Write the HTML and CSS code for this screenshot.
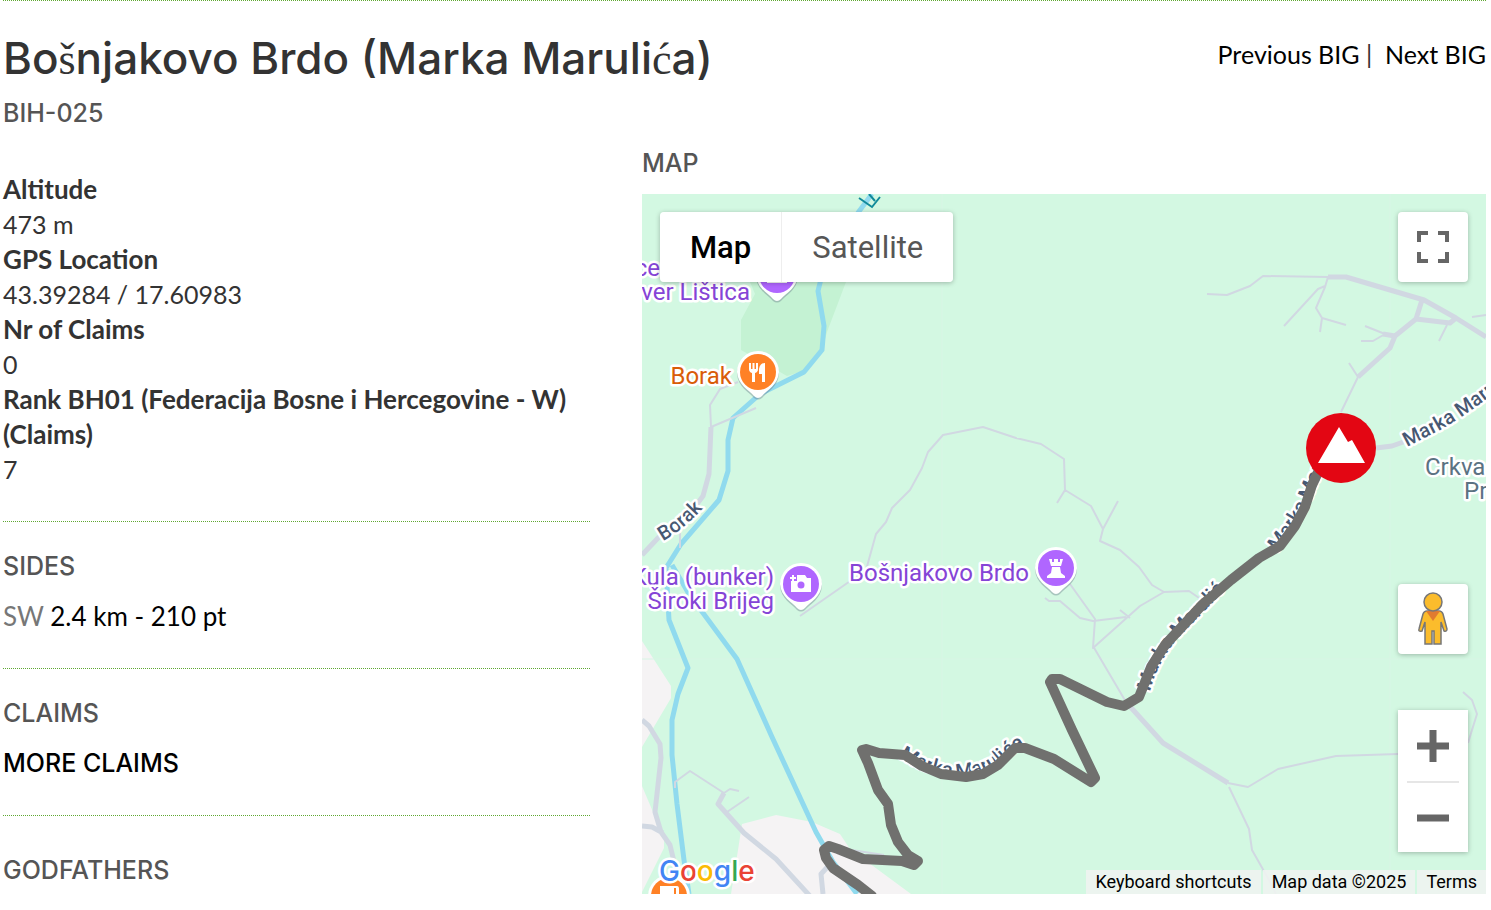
FILE: index.html
```html
<!DOCTYPE html>
<html lang="en">
<head>
<meta charset="utf-8">
<title>Bošnjakovo Brdo (Marka Marulića)</title>
<link rel="stylesheet" href="styles.css">
</head>
<body>
<div class="page">
  <header class="page-head">
    <div>
      <h1 class="title">Bo<span class="alt">š</span>njakovo Brdo (Marka Maruli<span class="alt">ć</span>a)</h1>
      <h2 class="heading code">BIH-025</h2>
    </div>
    <nav class="pager"><a href="#prev">Previous BIG</a> |&nbsp; <a href="#next">Next BIG</a></nav>
  </header>
  <main class="columns">
    <div class="info">
      <dl class="facts">
        <dt>Altitude</dt><dd>473 m</dd>
        <dt>GPS Location</dt><dd>43.39284 / 17.60983</dd>
        <dt>Nr of Claims</dt><dd>0</dd>
        <dt>Rank BH01 (Federacija Bosne i Hercegovine - W) (Claims)</dt><dd>7</dd>
      </dl>
      <section class="block">
        <h2 class="heading">SIDES</h2>
        <p class="line"><span class="side">SW</span> <a href="#side">2.4 km - 210 pt</a></p>
      </section>
      <section class="block">
        <h2 class="heading">CLAIMS</h2>
        <p class="line more"><a href="#claims">MORE CLAIMS</a></p>
      </section>
      <section class="block last">
        <h2 class="heading">GODFATHERS</h2>
      </section>
    </div>
    <section class="map-col">
      <h2 class="heading">MAP</h2>
      <div class="map">
        <svg class="tiles" viewBox="642 194 844 700" preserveAspectRatio="xMidYMid slice" role="img" aria-label="Map of Bošnjakovo Brdo">
          <defs>
            <path id="r1" d="M899 757Q924 774 958 778Q990 776 1009 756L1030 742"/>
            <path id="r2" d="M1150 692Q1158 660 1180 636L1228 587"/>
            <path id="r3" d="M1277 552Q1302 522 1314 492L1328 458"/>
            <path id="r4" d="M1407 447L1442 429Q1470 413 1502 387"/>
            <path id="r5" d="M663 541Q686 528 706 505"/>
            <g id="pin">
              <path class="pin-shadow" d="M-21 2A21 21 0 1 1 21 2C20 15 9 20 4 26Q0 29-4 26C-9 20-20 15-21 2Z"/>
              <path fill="#fff" d="M-21 0A21 21 0 1 1 21 0C20 13 9 18 4 24Q0 28-4 24C-9 18-20 13-21 0Z"/>
            </g>
          </defs>
          <rect x="642" y="194" width="844" height="700" fill="#d3f8e2"/>
          <path fill="#c4f2d3" d="M750 282H846L827 332L822 350L803 371L787 376L741 350V320L755 294Z"/>
          <path fill="#f5f3f4" d="M642 641L671 686V698L642 747ZM642 786L664 838V848L642 892ZM742 824L776 815L812 822L840 834L850 849L911 894H731L738 850Z"/>
          <g class="tile-seams"><path d="M942 194V894M1390 194V894M642 659H1486"/></g>
          <g class="water">
            <path d="M872 194Q840 235 822 275L818 291L824 326L822 350L804 372L760 394L733 418L728 440V471L719 500L681 544L666 568L669 620L688 668L678 694L672 720V755L677 804L684 860L689 894"/>
            <path d="M672 565L689 594L737 659L772 737L816 832L833 862L857 894"/>
          </g>
          <g class="road minor">
            <path d="M756 408L711 427M738 382L720 389L710 405L711 427M680 533V548"/>
            <path d="M800 616L866 570L876 534L886 522L892 508L910 490L922 468L928 452L943 435L983 427L1016 438L1041 444L1064 459L1065 490L1057 503M1065 490L1091 506L1103 529L1118 501M1103 529L1100 541L1120 550L1139 567L1152 585L1164 592L1189 591L1202 600M1164 592L1140 606L1093 648L1095 619L1070 584M1045 598L1049 601H1060L1080 618L1093 621L1126 617M1093 646L1126 702M1120 610L1130 618M1228 783L1248 787L1278 769L1336 756L1398 754M1229 787L1249 829L1252 850L1269 880L1276 894"/>
            <path d="M1207 294L1227 295L1250 286L1263 276L1328 277M1328 277L1325 287L1316 308L1322 318L1346 325M1322 318L1320 332M1325 286L1318 289L1284 326M1365 326L1385 334L1373 341H1361M1349 363L1358 377L1341 412M1447 325L1439 341M1472 317L1486 315"/>
            <path d="M675 788V782L690 771L724 793L730 789L739 791M727 812L749 797M1463 692L1472 700L1477 714L1468 743"/>
            <path d="M845 849L884 855M859 750L900 752"/>
          </g>
          <g class="road major">
            <path d="M711 427L709 474L703 496L694 508L658 538L642 555"/>
            <path d="M1126 702L1163 743L1228 783M1376 448L1392 446L1409 440M1328 277H1346L1424 300L1456 318L1486 337M1422 300L1416 319L1395 336L1390 348L1358 377M1416 319L1450 323L1456 318M1383 334L1395 336"/>
            <path d="M642 720L649 726L660 744L661 758L655 812L661 832L670 845L676 870M642 826L652 827L663 833M724 793L718 804L744 833L776 859L810 896M832 862L821 874L823 894"/>
          </g>
          <g class="road-label">
            <text><textPath href="#r1">Marka Marulića</textPath></text>
            <text><textPath href="#r2">Marka Marulića</textPath></text>
            <text><textPath href="#r3">Marka Marulića</textPath></text>
            <text><textPath href="#r4">Marka Marulića</textPath></text>
            <text><textPath href="#r5">Borak</textPath></text>
          </g>
          <path class="climb" d="M872 896L858 885L833 868L826 858L824 850L829 846L838 849L863 859L902 861L914 865L918 861L908 855L898 842L891 825L888 804L878 790L868 763L862 750L866 749L879 753L905 755L922 766L941 774L966 777L983 774L998 765L1015 748H1025L1054 759L1091 782L1095 778L1072 730L1050 682L1052 679H1060L1107 702L1124 706L1139 697L1151 667L1165 645L1203 604L1231 580L1259 558L1280 546L1295 526L1305 507L1312 485L1321 466"/>
          <g class="place purple">
            <text x="660" y="276" text-anchor="end">ce</text>
            <text x="750" y="300" text-anchor="end">ver Lištica</text>
            <text x="774" y="585" text-anchor="end">Kula (bunker)</text>
            <text x="774" y="609" text-anchor="end">Široki Brijeg</text>
            <text x="1029" y="581" text-anchor="end">Bošnjakovo Brdo</text>
          </g>
          <text class="place orange" x="732" y="384" text-anchor="end">Borak</text>
          <g class="place slate"><text x="1425" y="475">Crkva</text><text x="1464" y="499">Pr</text></g>
          <g transform="translate(777 275)"><use href="#pin"/><circle r="18" fill="#b066ff"/><path d="M-10 7H10" stroke="#fff" stroke-width="2"/></g>
          <g transform="translate(758 372)"><use href="#pin"/><circle r="18" fill="#ff8126"/>
            <path fill="#fff" d="M-9-9H-7V-3H-5.500V-9H-3.500V-3H-2V-9H0V-3Q0 0-3 1V10H-6V1Q-9 0-9-3ZM7-9V10H4V2H1V-3Q2-9 7-9Z"/></g>
          <g transform="translate(801 584)"><use href="#pin"/><circle r="18" fill="#b066ff"/>
            <path fill="#fff" d="M-10-3H-4V-9H4L6-6H10V8H-10Z"/><circle cx="0" cy="1" r="3.500" fill="#b066ff"/><path d="M-11-6H-5M-8-9V-3" stroke="#b066ff" stroke-width="5"/><path d="M-11-6H-5M-8-9V-3" stroke="#fff" stroke-width="2"/></g>
          <g transform="translate(1056 568)"><use href="#pin"/><circle r="18" fill="#b066ff"/>
            <path fill="#fff" d="M-7-9H-4V-6H-2V-9H2V-6H4V-9H7L5-2H-5ZM-4-1H4L5 5L9 8V10H-9V8L-5 5Z"/></g>
          <g transform="translate(669 896)"><use href="#pin"/><circle r="18" fill="#ff8126"/><path fill="#fff" d="M-9-10H8Q10-10 10-7V0H7V-8H5V2H-9Z"/></g>
          <path d="M859 198L872 207L880 197M869 194L875 201" fill="none" stroke="#118a99" stroke-width="2"/>
          <g transform="translate(1341 448)"><circle r="35" fill="#e30613"/><path fill="#fff" d="M-23 15L-2-21L7-6L11-8L24 15Z"/></g>
          <text class="logo" x="659" y="881"><tspan fill="#4285f4">G</tspan><tspan fill="#ea4335">o</tspan><tspan fill="#fbbc04">o</tspan><tspan fill="#4285f4">g</tspan><tspan fill="#34a853">l</tspan><tspan fill="#ea4335">e</tspan></text>
        </svg>
        <div class="overlay map-type">
          <button class="type active" type="button">Map</button><button class="type" type="button">Satellite</button>
        </div>
        <button class="overlay square full" type="button" aria-label="Toggle fullscreen view">
          <svg width="32" height="32" viewBox="0 0 32 32"><path d="M2 11V2H11M21 2H30V11M30 21V30H21M11 30H2V21" fill="none" stroke="#666" stroke-width="4"/></svg>
        </button>
        <div class="overlay tools">
          <button class="square" type="button" aria-label="Street View">
            <svg width="32" height="56" viewBox="0 0 32 56"><path d="M10 20H22Q25 20 26 23L30 38Q30 41 27 40L24 31V53H17V40H15V53H8V31L5 40Q1 41 2 38L6 23Q7 20 10 20Z" fill="#fbbc2c" stroke="#777" stroke-width="1.500"/><path d="M9 20H23L16 30Z" fill="#e07b30"/><circle cx="16" cy="11" r="9" fill="#fbbc2c" stroke="#777" stroke-width="1.500"/></svg>
          </button>
          <div class="zoom">
            <button type="button" aria-label="Zoom in"><svg width="32" height="32" viewBox="0 0 32 32"><path d="M0 16H32M16 0V32" stroke="#666" stroke-width="7"/></svg></button>
            <button type="button" aria-label="Zoom out"><svg width="32" height="32" viewBox="0 0 32 32"><path d="M0 16H32" stroke="#666" stroke-width="7"/></svg></button>
          </div>
        </div>
        <div class="overlay credits">
          <button type="button">Keyboard shortcuts</button><span>Map data ©2025</span><a href="#terms">Terms</a>
        </div>
      </div>
    </section>
  </main>
</div>
</body>
</html>
```
FILE: styles.css
```css
* { box-sizing: border-box; }
body { margin: 0; background: #fff; color: #333; font: 25px/35px Lato, "Open Sans", sans-serif; }
h1, h2, p, dl, dd { margin: 0; }
a { color: #000; text-decoration: none; }
button { padding: 0; border: 0; background: #fff; font-family: Roboto, sans-serif; cursor: pointer; }
.page { margin: 0 5px 0 3px; border-top: 1px dotted #5fa832; }
.page-head { display: flex; justify-content: space-between; padding-top: 31px; }
.title { font: 500 44px/52px Inter, sans-serif; color: #333; }
.alt { font-family: "Liberation Serif", serif; font-weight: 400; }
.heading { font: 500 25px/34px Inter, sans-serif; color: #555; }
.code { margin-top: 10px; }
.pager { padding-top: 5px; color: #333; white-space: nowrap; }
.columns { display: grid; grid-template-columns: 587fr 844fr; gap: 52px; padding-top: 16px; }
.facts { padding: 26px 0 34px; }
dt { font-size: 26px; font-weight: 700; }
.block { border-top: 1px dotted #5fa832; padding: 27px 0 34px; }
.line { margin-top: 16px; font-size: 26px; }
.side { color: #777; }
.more { font: 500 25px/35px Inter, sans-serif; }
.last { padding: 37px 0 0; }
.map { position: relative; height: 700px; margin-top: 14px; overflow: hidden; background: #d3f8e2; }
.tiles { display: block; width: 100%; height: 100%; font-family: Roboto, sans-serif; }
.tiles text { paint-order: stroke; stroke: #fff; stroke-width: 5px; stroke-linejoin: round; }
.pin-shadow { fill: #678; opacity: .4; }
.tile-seams { stroke: #d8f5e5; stroke-width: 1; }
.water { fill: none; stroke: #90daee; stroke-width: 5; stroke-linejoin: round; }
.road { fill: none; stroke: #d1d8e2; stroke-linejoin: round; }
.minor { stroke-width: 2; }
.major { stroke-width: 5; }
.road-label { font-size: 20px; font-weight: 500; fill: #475872; }
.climb { fill: none; stroke: #70706e; stroke-width: 10; stroke-linejoin: round; stroke-linecap: round; }
.place { font-size: 24px; }
.purple { fill: #8544d6; }
.orange { fill: #d95c08; }
.slate { fill: #5b7282; }
.logo { font: 500 28px Inter, sans-serif; }
.overlay { position: absolute; }
.map-type { top: 18px; left: 18px; display: flex; border-radius: 4px; overflow: hidden; box-shadow: 0 1px 5px #0004; }
.type { height: 70px; padding: 0 30px; font-size: 31px; color: #565656; }
.type + .type { border-left: 1px solid #eee; }
.active { color: #000; font-weight: 500; }
.square { display: grid; place-items: center; width: 70px; height: 70px; border-radius: 4px; box-shadow: 0 1px 5px #0004; }
.full { top: 18px; right: 18px; }
.tools { right: 18px; bottom: 42px; display: grid; gap: 56px; }
.zoom { display: grid; width: 70px; background: #fff; box-shadow: 0 1px 5px #0004; }
.zoom button { height: 71px; display: grid; place-items: center; }
.zoom button + button { margin: 0 9px; border-top: 2px solid #e6e6e6; }
.credits { right: 0; bottom: 0; display: flex; gap: 2px; font: 18px/24px Roboto, sans-serif; color: #000; }
.credits > * { padding: 0 9px; font: inherit; background: #f0f4f1dd; }
```
